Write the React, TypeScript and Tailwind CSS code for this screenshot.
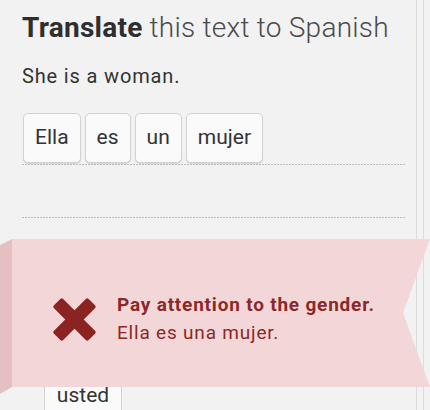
import React from 'react'

const answer = ['Ella', 'es', 'un', 'mujer']

function Chip({ word }: { word: string }) {
  return (
    <div className="h-[50px] px-[11px] flex items-center rounded-[5px] border border-[#d2d2d2] bg-[#fafafa] shadow-[0_1px_1px_rgba(0,0,0,0.12)] text-[21px] text-[#333]">
      {word}
    </div>
  )
}

function Dots() {
  return <div className="h-px w-full bg-[repeating-linear-gradient(to_right,#bdbdbd_0_2px,transparent_2px_3px)]" />
}

function CrossIcon() {
  return (
    <svg width="43" height="43" viewBox="0 0 43 43" className="shrink-0">
      <g transform="translate(21.5 21.5)" fill="#8b2323">
        <rect x="-24.5" y="-6.5" width="49" height="13" rx="2" transform="rotate(45)" />
        <rect x="-24.5" y="-6.5" width="49" height="13" rx="2" transform="rotate(-45)" />
      </g>
    </svg>
  )
}

export default function App() {
  return (
    <div className="relative w-[430px] h-[410px] overflow-hidden bg-[#f2f2f2] flex font-['Roboto',sans-serif]">
      <div className="w-[417px] shrink-0 border-r border-[#dcdcdc] pl-[22px] pr-[10px]">
        <h1 className="pt-[11px] text-[28px] leading-[34px] tracking-[0.25px] text-[#4a4a4a] font-light whitespace-nowrap">
          <span className="font-bold text-[#2e2e2e]">Translate</span> this text to Spanish
        </h1>
        <p className="mt-[19px] text-[20px] leading-[24px] tracking-[0.85px] text-[#333]">She is a woman.</p>

        <div className="mt-[25px]">
          <div className="flex gap-[4px] pl-px h-[51px] items-start">
            {answer.map((w) => (
              <Chip key={w} word={w} />
            ))}
          </div>
          <Dots />
          <div className="h-[52px]" />
          <Dots />
        </div>

        <div className="mt-[165px] pl-[22px] flex">
          <div className="h-[50px] w-[78px] flex items-center justify-center border border-[#d2d2d2] bg-[#fafafa] text-[21px] text-[#333] -mt-[12px]">
            usted
          </div>
        </div>
      </div>
      <div className="w-[7px] shrink-0 border-r border-[#dcdcdc]" />

      {/* feedback ribbon */}
      <div className="absolute left-0 top-[239px] w-[430px] h-[148px]">
        <div className="absolute left-0 top-0 w-[12px] h-[155px] bg-[#e5c0c2] [clip-path:polygon(0_6px,100%_0,100%_148px,0_100%)]" />
        <div className="absolute left-[12px] right-0 top-0 bottom-0 bg-[#f3d7d8] [clip-path:polygon(0_0,100%_0,calc(100%-27px)_50%,100%_100%,0_100%)]" />
        <div className="relative h-full flex items-center pl-[53px] pt-[12px] gap-[21px]">
          <CrossIcon />
          <div className="text-[#8b2828] tracking-[0.8px]">
            <div className="text-[19px] leading-[28px] font-bold">Pay attention to the gender.</div>
            <div className="text-[19px] leading-[28px]">Ella es una mujer.</div>
          </div>
        </div>
      </div>
    </div>
  )
}
